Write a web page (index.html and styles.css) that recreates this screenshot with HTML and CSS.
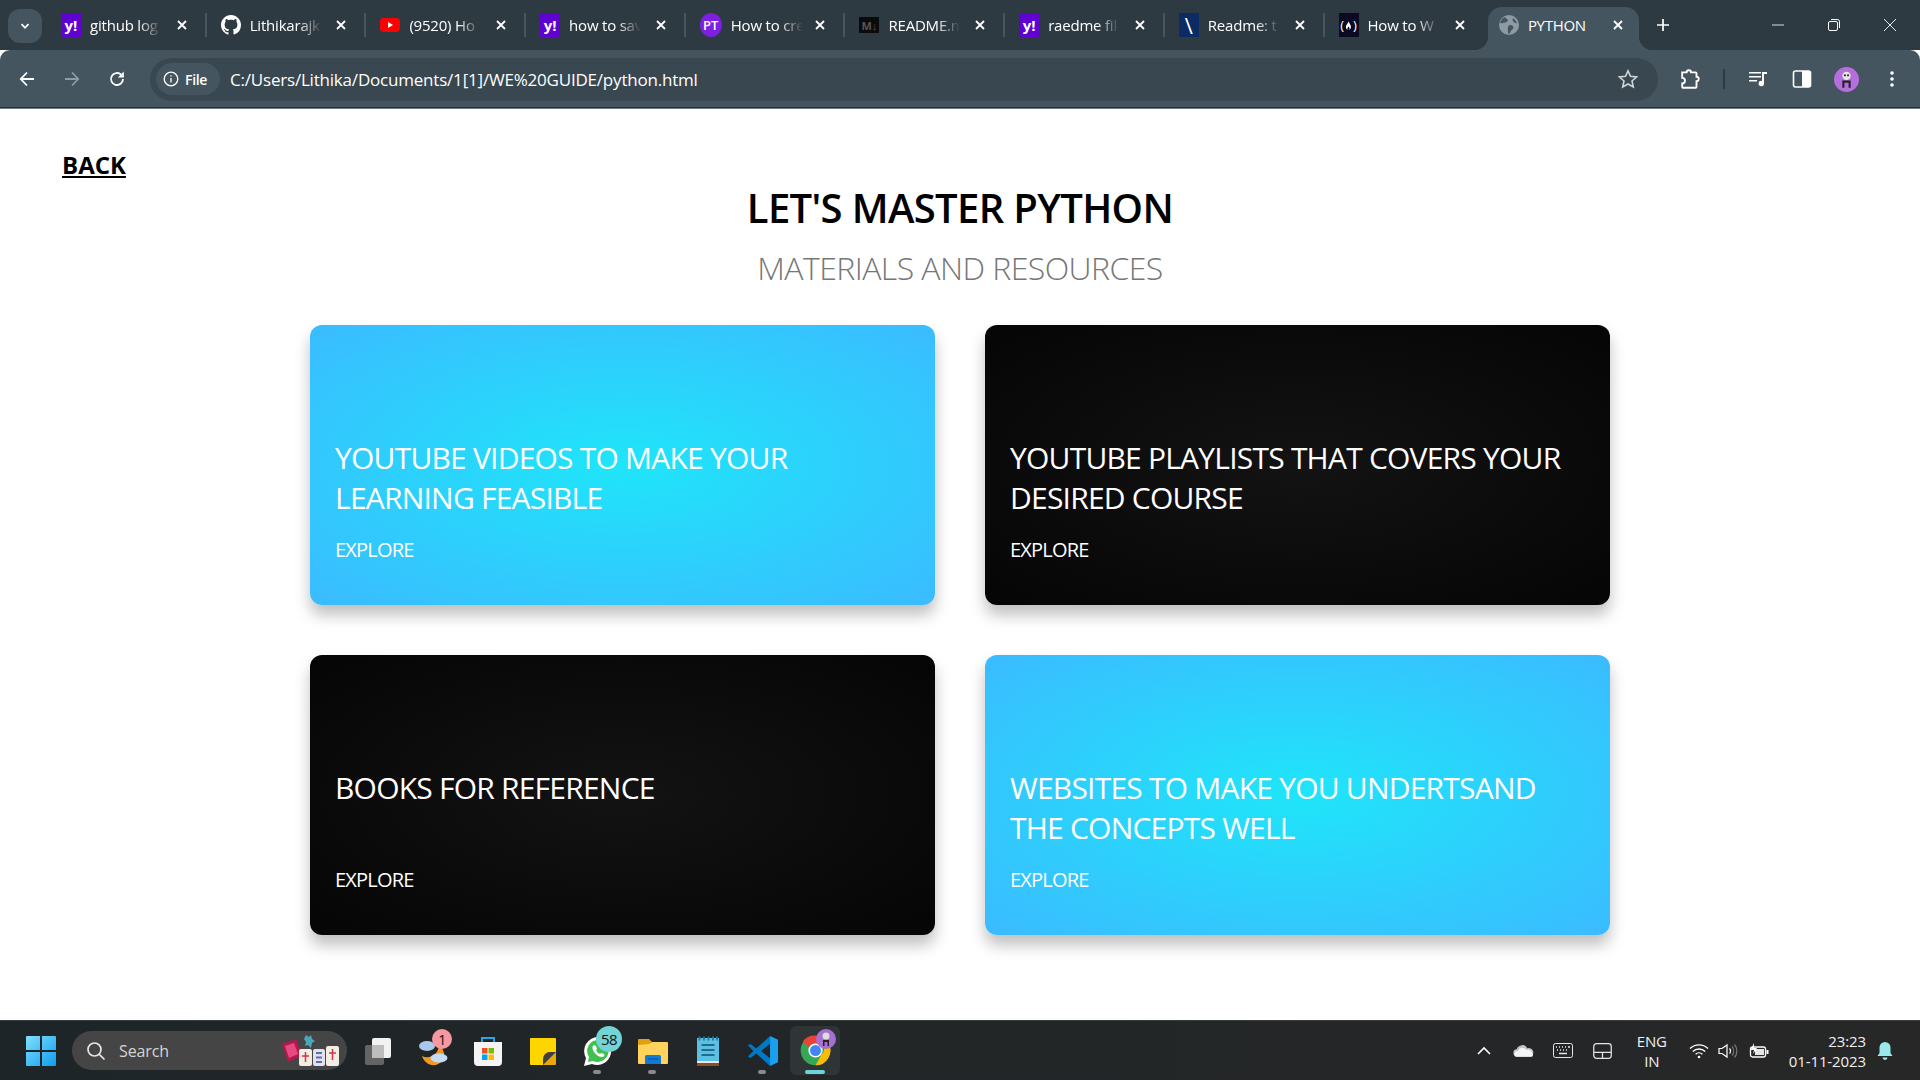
FILE: index.html
```html
<!DOCTYPE html>
<html lang="en">
<head>
  <meta charset="UTF-8">
  <title>PYTHON</title>
  <link rel="stylesheet" href="styles.css">
</head>
<body>

  <!-- browser tabs -->
  <div class="tabstrip">
    <div class="tab-search">
      <svg class="ic12" viewBox="0 0 12 12"><path d="M2.5 4.2 6 7.8l3.5-3.6" fill="none" stroke="#fff" stroke-width="1.8"/></svg>
    </div>
    <div class="tab">
      <span class="fav fav-yahoo">y!</span><span class="tab-title">github log</span>
      <svg class="tab-x" viewBox="0 0 12 12"><path d="M2 2l8 8M10 2l-8 8"/></svg>
    </div>
    <div class="tab">
      <svg class="fav" viewBox="0 0 16 16"><path fill="#fff" d="M8 0C3.58 0 0 3.58 0 8c0 3.54 2.29 6.53 5.47 7.59.4.07.55-.17.55-.38 0-.19-.01-.82-.01-1.49-2.01.37-2.53-.49-2.69-.94-.09-.23-.48-.94-.82-1.13-.28-.15-.68-.52-.01-.53.63-.01 1.08.58 1.23.82.72 1.21 1.87.87 2.33.66.07-.52.28-.87.51-1.07-1.78-.2-3.64-.89-3.64-3.95 0-.87.31-1.59.82-2.15-.08-.2-.36-1.02.08-2.12 0 0 .67-.21 2.2.82.64-.18 1.32-.27 2-.27.68 0 1.36.09 2 .27 1.53-1.04 2.2-.82 2.2-.82.44 1.1.16 1.92.08 2.12.51.56.82 1.27.82 2.15 0 3.07-1.87 3.75-3.65 3.95.29.25.54.73.54 1.48 0 1.07-.01 1.93-.01 2.2 0 .21.15.46.55.38A8.013 8.013 0 0016 8c0-4.42-3.58-8-8-8z"/></svg>
      <span class="tab-title">Lithikarajk</span>
      <svg class="tab-x" viewBox="0 0 12 12"><path d="M2 2l8 8M10 2l-8 8"/></svg>
    </div>
    <div class="tab">
      <svg class="fav" viewBox="0 0 20 20"><rect y="3" width="20" height="14" rx="4" fill="#f00"/><path d="M8 7l5 3-5 3z" fill="#fff"/></svg>
      <span class="tab-title">(9520) Ho</span>
      <svg class="tab-x" viewBox="0 0 12 12"><path d="M2 2l8 8M10 2l-8 8"/></svg>
    </div>
    <div class="tab">
      <span class="fav fav-yahoo">y!</span><span class="tab-title">how to sav</span>
      <svg class="tab-x" viewBox="0 0 12 12"><path d="M2 2l8 8M10 2l-8 8"/></svg>
    </div>
    <div class="tab">
      <span class="fav fav-pt">PT</span><span class="tab-title">How to cre</span>
      <svg class="tab-x" viewBox="0 0 12 12"><path d="M2 2l8 8M10 2l-8 8"/></svg>
    </div>
    <div class="tab">
      <span class="fav fav-md">M↓</span><span class="tab-title">README.m</span>
      <svg class="tab-x" viewBox="0 0 12 12"><path d="M2 2l8 8M10 2l-8 8"/></svg>
    </div>
    <div class="tab">
      <span class="fav fav-yahoo">y!</span><span class="tab-title">raedme fil</span>
      <svg class="tab-x" viewBox="0 0 12 12"><path d="M2 2l8 8M10 2l-8 8"/></svg>
    </div>
    <div class="tab">
      <span class="fav fav-slash">\</span><span class="tab-title">Readme: t</span>
      <svg class="tab-x" viewBox="0 0 12 12"><path d="M2 2l8 8M10 2l-8 8"/></svg>
    </div>
    <div class="tab tab-last">
      <span class="fav fav-fcc">(<svg class="flame" viewBox="0 0 8 12"><path d="M4 1c.4 2 2.800 3.500 2.800 6.500C6.800 9.800 5.500 11 5 11c.6-1.500 0-3-1-4-1 1-1.600 2.500-1 4-.6 0-2-1.200-2-3.500C1 5 3.800 3.500 4 1z" fill="#fff"/></svg>)</span>
      <span class="tab-title">How to W</span>
      <svg class="tab-x" viewBox="0 0 12 12"><path d="M2 2l8 8M10 2l-8 8"/></svg>
    </div>
    <div class="tab-active">
      <svg class="fav" viewBox="0 0 18 18"><circle cx="9" cy="9" r="9" fill="#8d9ba3"/><path d="M5 2c2 1 3 2 3 3S6 7 5 7 2 8 1 7c.5-2 2-4 4-5zM10 9c2 0 3 1 3 2s-1 2-2 3-1 3-2 3-1-3-1-4 0-4 2-4zM13 3c1 1 3 3 3 4s-2 0-3-1-1-3 0-3z" fill="#44555f"/></svg>
      <span class="active-title">PYTHON</span>
      <svg class="tab-x" viewBox="0 0 12 12"><path d="M2 2l8 8M10 2l-8 8"/></svg>
    </div>
    <svg class="new-tab" viewBox="0 0 14 14"><path d="M7 1v12M1 7h12" stroke="#fff" stroke-width="1.700"/></svg>
    <div class="win-btns">
      <span class="win-btn"><svg class="ic12" viewBox="0 0 12 12"><path d="M0 6h12" stroke="#d8dcde"/></svg></span>
      <span class="win-btn"><svg class="ic12" viewBox="0 0 12 12" fill="none" stroke="#fff"><rect x=".5" y="2.500" width="9" height="9" rx="1.500"/><path d="M3 .5h6.500a2 2 0 0 1 2 2V9"/></svg></span>
      <span class="win-btn"><svg class="ic12" viewBox="0 0 12 12"><path d="M0 0l12 12M12 0L0 12" stroke="#fff" stroke-width=".9"/></svg></span>
    </div>
  </div>

  <!-- address bar -->
  <div class="toolbar">
    <div class="nav-btns">
      <svg class="ic18" viewBox="0 0 18 18" fill="none" stroke="#fff" stroke-width="1.800"><path d="M16 9H3M9 2.500 2.800 9 9 15.500"/></svg>
      <svg class="ic18" viewBox="0 0 18 18" fill="none" stroke="#8f9ba2" stroke-width="1.800"><path d="M2 9h13M9 2.500 15.200 9 9 15.500"/></svg>
      <svg class="ic18" viewBox="0 0 18 18" fill="none" stroke="#fff" stroke-width="1.800"><path d="M15 9a6 6 0 1 1-1.800-4.300L15 6.500"/><path d="M15.800 1.500v6h-6z" stroke="none" fill="#fff"/></svg>
    </div>
    <div class="omnibox">
      <div class="chip">
        <svg class="ic16" viewBox="0 0 16 16" fill="none" stroke="#fff" stroke-width="1.300"><circle cx="8" cy="8" r="6.800"/><path d="M8 7v4.500M8 4.200v1.400"/></svg>
        <span>File</span>
      </div>
      <span class="url">C:/Users/Lithika/Documents/1[1]/WE%20GUIDE/python.html</span>
      <svg class="star" viewBox="0 0 20 20" fill="none" stroke="#cfd4d7" stroke-width="1.600"><path d="M10 1.800l2.500 5.500 6 .7-4.500 4 1.300 6L10 15l-5.300 3 1.300-6-4.500-4 6-.7z"/></svg>
    </div>
    <div class="tool-icons">
      <svg class="puzzle" viewBox="0 0 20 20" fill="none" stroke="#fff" stroke-width="1.700"><path d="M2 4h4a2 2 0 0 1 4 0h4a1 1 0 0 1 1 1v3a2 2 0 0 1 0 4v5a1 1 0 0 1-1 1H3a1 1 0 0 1-1-1v-3a2 2 0 0 0 0-5z"/></svg>
      <span class="tool-sep"></span>
      <svg class="ic20 media" viewBox="0 0 20 20" fill="#fff"><path d="M1 3h12v1.600H1zM1 7h12v1.600H1zM1 11h8v1.600H1z"/><path d="M14 3h5v2h-3v9.500a2.700 2.700 0 1 1-2-2.600z"/></svg>
      <svg class="ic20 panel" viewBox="0 0 20 20"><rect x="1.500" y="2" width="17" height="16" rx="2" fill="none" stroke="#fff" stroke-width="1.600"/><rect x="10" y="2" width="8" height="16" fill="#fff"/></svg>
      <svg class="avatar" viewBox="0 0 24 24"><circle cx="12" cy="12" r="12" fill="#b56fdc"/><circle cx="12" cy="8.500" r="4" fill="#e8e8e8"/><circle cx="10.500" cy="8" r="1" fill="#222"/><circle cx="13.500" cy="8" r="1" fill="#222"/><path d="M8 13h8v7h-2v-5h-4v5H8z" fill="#222"/></svg>
      <svg class="ic20 dots" viewBox="0 0 20 20" fill="#fff"><circle cx="10" cy="4" r="1.800"/><circle cx="10" cy="10" r="1.800"/><circle cx="10" cy="16" r="1.800"/></svg>
    </div>
  </div>

  <!-- the page itself -->
  <main class="page">
    <a class="back" href="#">BACK</a>
    <h1 class="title">LET'S MASTER PYTHON</h1>
    <h2 class="subtitle">MATERIALS AND RESOURCES</h2>

    <div class="cards">
      <div class="card card-blue">
        <h3>YOUTUBE VIDEOS TO MAKE YOUR LEARNING FEASIBLE</h3>
        <a href="#">EXPLORE</a>
      </div>
      <div class="card card-black">
        <h3>YOUTUBE PLAYLISTS THAT COVERS YOUR DESIRED COURSE</h3>
        <a href="#">EXPLORE</a>
      </div>
      <div class="card card-black">
        <h3>BOOKS FOR REFERENCE</h3>
        <a href="#">EXPLORE</a>
      </div>
      <div class="card card-blue">
        <h3>WEBSITES TO MAKE YOU UNDERTSAND THE CONCEPTS WELL</h3>
        <a href="#">EXPLORE</a>
      </div>
    </div>
  </main>

  <!-- windows taskbar -->
  <div class="taskbar">
    <svg class="start" viewBox="0 0 30 30"><defs><linearGradient id="win" x1="0" y1="0" x2="1" y2="1"><stop offset="0" stop-color="#7fe0fb"/><stop offset="1" stop-color="#0f9cf0"/></linearGradient></defs><path fill="url(#win)" d="M0 1a1 1 0 0 1 1-1h13v14H0zM16 0h13a1 1 0 0 1 1 1v13H16zM0 16h14v14H1a1 1 0 0 1-1-1zM16 16h14v13a1 1 0 0 1-1 1H16z"/></svg>

    <div class="search">
      <svg class="ic20" viewBox="0 0 20 20" fill="none" stroke="#e6e6e6" stroke-width="1.700"><circle cx="8.500" cy="8.500" r="6.500"/><path d="M13.300 13.300 18.500 18.500"/></svg>
      <span>Search</span>
      <svg class="search-art" viewBox="0 0 62 34"><path d="M3 10l14-5 6 17-14 6z" fill="#b5174f"/><path d="M6 12l9-3 4 11-9 4z" fill="#e84a7f"/><path d="M27 1l3 2 2-2 1 4 3 2-3 2-1 5-3-3-3 1 1-4-2-3z" fill="#4aa6b8"/><rect x="20" y="15" width="13" height="17" rx="2" fill="#f3eee4"/><rect x="34" y="15" width="12" height="17" rx="2" fill="#e3e1ea"/><rect x="47" y="12" width="13" height="20" rx="2" fill="#f3eee4"/><path d="M26.500 18v10M23 22h7M53.500 15v11M50 19h7" stroke="#d6334a" stroke-width="1.500"/><path d="M37 19h6M37 23.500h6M37 28h6" stroke="#5a6bc0" stroke-width="2"/></svg>
    </div>

    <div class="task-icons">
      <span class="task-slot">
        <svg class="ic32" viewBox="0 0 32 32"><rect x="10" y="3" width="19" height="20" rx="2" fill="#f2f2f2"/><rect x="3" y="10" width="19" height="20" rx="2" fill="#6b6b6b" fill-opacity=".9"/><rect x="10" y="10" width="12" height="13" fill="#bdbdbd"/></svg>
      </span>
      <span class="task-slot">
        <svg class="ic32" viewBox="0 0 32 32"><path d="M22 11a13 11 0 0 1-3 19C12 31 7 27 5 21c6 3 15 1 17-10z" fill="#f39a1d"/><ellipse cx="10" cy="11" rx="8" ry="5" fill="#a8c8ec"/><ellipse cx="22" cy="23" rx="8.500" ry="4.500" fill="#c4dcf5"/></svg>
        <span class="badge badge-red">1</span>
      </span>
      <span class="task-slot">
        <svg class="ic32" viewBox="0 0 32 32"><path d="M10 8V3h12v5" fill="none" stroke="#2aa5e8" stroke-width="2"/><path d="M2 7h28v20a4 4 0 0 1-4 4H6a4 4 0 0 1-4-4z" fill="#f4f4f4"/><rect x="10" y="13" width="5.500" height="5.500" fill="#f25022"/><rect x="16.500" y="13" width="5.500" height="5.500" fill="#7fba00"/><rect x="10" y="19.500" width="5.500" height="5.500" fill="#00a4ef"/><rect x="16.500" y="19.500" width="5.500" height="5.500" fill="#ffb900"/></svg>
      </span>
      <span class="task-slot">
        <svg class="ic32" viewBox="0 0 32 32"><path d="M4 3h24a1 1 0 0 1 1 1v18l-8 8H4a1 1 0 0 1-1-1V4a1 1 0 0 1 1-1z" fill="#ffd500"/><path d="M29 17v12a1 1 0 0 1-1 1H16v-6a7 7 0 0 1 7-7z" fill="#e8a70c"/><path d="M29 17 16 30v-6a7 7 0 0 1 7-7z" fill="#3f3f3f"/></svg>
      </span>
      <span class="task-slot has-dot">
        <svg class="ic32" viewBox="0 0 32 32"><path d="M16 2a14 14 0 0 0-12 21L2 31l8-2A14 14 0 1 0 16 2z" fill="#fff"/><path d="M16 5a11 11 0 0 0-9 17l-1 5 5-1A11 11 0 1 0 16 5z" fill="#3fc04f"/><path d="M12 10c-2 1-2 4 0 7s5 5 8 5c2 0 3-2 2-3l-3-1-1 1c-2-1-3-2-4-4l1-1-1-3z" fill="#fff"/></svg>
        <span class="badge badge-teal">58</span>
      </span>
      <span class="task-slot has-dot">
        <svg class="ic32" viewBox="0 0 32 32"><path d="M1 5a1 1 0 0 1 1-1h10l3 3-3 3H1z" fill="#e0a010"/><path d="M1 10l11-1 3-2h15a1 1 0 0 1 1 1v20a1 1 0 0 1-1 1H2a1 1 0 0 1-1-1z" fill="#ffd35c"/><path d="M6 29v-7a2 2 0 0 1 2-2h16a2 2 0 0 1 2 2v7z" fill="#0f7bd6" transform="translate(3.200 0) scale(.8 1)"/><path d="M11 24h10" stroke="#0a5ca6" stroke-width="1.500"/></svg>
      </span>
      <span class="task-slot">
        <svg class="ic32" viewBox="0 0 32 32"><rect x="5" y="3" width="22" height="26" fill="#5bc0e4"/><path d="M5 26h22v5H5z" fill="#8a4f24"/><path d="M5 26h22v2H5z" fill="#e8e8e8"/><path d="M9.500 10h13M9.500 15h13M9.500 20h13" stroke="#1e6d8e" stroke-width="2"/><path d="M7.500 1.500v4M12 1.500v4M16.500 1.500v4M21 1.500v4M25 1.500v4" stroke="#1e7d9e" stroke-width="1.800"/></svg>
      </span>
      <span class="task-slot has-dot">
        <svg class="ic32" viewBox="0 0 100 100"><path fill="#0078c8" fill-rule="evenodd" d="M72 3 29 42 11 28 3 33l17 17L3 67l8 5 18-14 43 39zM72 27 44 50l28 23z"/><path fill="#1ba0ee" d="M72 3l25 12v70L72 97z"/></svg>
      </span>
      <span class="task-slot task-active">
        <svg class="chrome-logo" viewBox="0 0 48 48"><circle cx="24" cy="24" r="23" fill="#34a853"/><path d="M24 1a23 23 0 0 1 20 11.500H24A11.500 11.500 0 0 0 13.800 19L4.500 9.800A23 23 0 0 1 24 1z" fill="#ea4335"/><path d="M44 12.500A23 23 0 0 1 24 47l10-17.500a11.500 11.500 0 0 0-.5-17z" fill="#fbbc05"/><circle cx="24" cy="24" r="11" fill="#fff"/><circle cx="24" cy="24" r="8.500" fill="#4285f4"/></svg>
        <svg class="chrome-avatar" viewBox="0 0 20 20"><circle cx="10" cy="10" r="10" fill="#a76fd1"/><circle cx="10" cy="7" r="3.500" fill="#ddd"/><path d="M7 11h6v6h-1.500v-4h-3v4H7z" fill="#222"/></svg>
      </span>
    </div>

    <div class="tray">
      <svg class="tray-chevron" viewBox="0 0 14 14"><path d="M1 10l6-6 6 6" fill="none" stroke="#fff" stroke-width="1.600"/></svg>
      <svg class="tray-cloud" viewBox="0 0 22 14"><path d="M5 13a4 4 0 0 1-1-8 6 6 0 0 1 11-1 4.500 4.500 0 0 1 3 9z" fill="#bfc3c5"/><path d="M4 13a3 3 0 0 1 1-6 5 5 0 0 1 9-1 4 4 0 0 1 6 3 2.500 2.500 0 0 1 0 4z" fill="#f4f4f4"/></svg>
      <svg class="tray-key" viewBox="0 0 20 15" fill="none" stroke="#e6e6e6"><rect x=".5" y=".5" width="19" height="14" rx="2"/><path d="M3 4h1M6 4h1M9 4h1M12 4h1M15 4h2M4 7h1M7 7h1M10 7h1M13 7h1M6 10.500h8" stroke-width="1.300"/></svg>
      <svg class="tray-pad" viewBox="0 0 20 17" fill="none" stroke="#e6e6e6" stroke-width="1.300"><rect x=".7" y=".7" width="18.600" height="15.600" rx="3"/><path d="M1 10h18M10 10v6"/></svg>
      <div class="lang">ENG<br>IN</div>
      <svg class="tray-wifi" viewBox="0 0 20 16" fill="none" stroke="#fff" stroke-width="1.400"><path d="M1 5.500a13 13 0 0 1 18 0M3.800 8.500a9 9 0 0 1 12.400 0M6.600 11.200a5 5 0 0 1 6.800 0"/><circle cx="10" cy="14" r="1.300" fill="#fff" stroke="none"/></svg>
      <svg class="tray-vol" viewBox="0 0 20 16" fill="none" stroke="#fff" stroke-width="1.200"><path d="M1 5.500h3L9 2v12L4 10.500H1z"/><path d="M11.500 5.500a3.500 3.500 0 0 1 0 5"/><path d="M14 3.500a7 7 0 0 1 0 9M16.500 1.500a10 10 0 0 1 0 13" stroke="#777"/></svg>
      <svg class="tray-bat" viewBox="0 0 20 16"><rect x="1.500" y="4" width="15" height="10" rx="2" fill="none" stroke="#fff" stroke-width="1.300"/><rect x="6" y="6" width="9" height="6" fill="#e6e6e6"/><path d="M17.500 7h2v4h-2z" fill="#fff"/><path d="M5 0 1.500 7H5l-1 4 4-6H5z" fill="#fff"/></svg>
      <div class="clock">23:23<br>01-11-2023</div>
      <svg class="tray-bell" viewBox="0 0 18 20"><path d="M9 1a5.500 5.500 0 0 1 5.500 5.500V12l2 3h-15l2-3V6.500A5.500 5.500 0 0 1 9 1z" fill="#9be8ea"/><path d="M6.500 16.500h5a2.500 2.500 0 0 1-5 0z" fill="#9be8ea"/></svg>
    </div>
  </div>

</body>
</html>
```

FILE: styles.css
```css
* {
  box-sizing: border-box;
}

body {
  margin: 0;
  height: 1080px;
  overflow: hidden;
  display: flex;
  flex-direction: column;
  background-color: white;
  font-family: "Open Sans", "Noto Sans", sans-serif;
}

svg {
  flex: none;
  display: block;
}

.ic12 { width: 12px; height: 12px; }
.ic16 { width: 16px; height: 16px; }
.ic18 { width: 18px; height: 18px; }
.ic20 { width: 20px; height: 20px; }
.ic32 { width: 32px; height: 32px; }

/* tabs */
.tabstrip {
  height: 50px;
  flex: none;
  display: flex;
  align-items: center;
  background-color: #2e3a41;
  padding-left: 8px;
  color: white;
  font-size: 15px;
}

.tab-search {
  width: 34px;
  height: 34px;
  margin-right: 5px;
  margin-top: 1px;
  border-radius: 12px;
  background-color: #44555f;
  display: flex;
  align-items: center;
  justify-content: center;
}

.tab {
  width: 159.7px;
  height: 24px;
  padding-left: 14px;
  padding-right: 17px;
  display: flex;
  align-items: center;
  border-right: 2px solid #46555e;
}

.tab-last {
  width: 159.4px;
  border-right: none;
  padding-right: 18px;
}

.fav {
  width: 20px;
  height: 20px;
  flex: none;
  display: flex;
  align-items: center;
  justify-content: center;
  font-weight: 700;
  font-size: 15px;
  line-height: 1;
}

.fav-yahoo { background-color: #5f01d1; height: 24px; }
.fav-pt { background-color: #7c1fe0; border-radius: 50%; height: 24px; width: 22px; font-size: 13px; font-weight: 600; }
.fav-md { background-color: #0b0b0b; color: #555; font-size: 11px; height: 16px; }
.fav-slash { background-color: #0c2a63; font-size: 22px; height: 24px; font-weight: 400; }
.fav-fcc { background-color: #0a0a23; font-size: 13px; height: 24px; font-weight: 400; gap: 1px; }
.flame { width: 7px; height: 11px; }

.tab-title {
  width: 78px;
  margin-left: 9px;
  white-space: nowrap;
  overflow: hidden;
  letter-spacing: -0.2px;
  -webkit-mask-image: linear-gradient(to right, black 62%, transparent 92%);
  mask-image: linear-gradient(to right, black 62%, transparent 92%);
}

.tab-x {
  width: 12px;
  height: 12px;
  margin-left: auto;
  fill: none;
  stroke: white;
  stroke-width: 1.8;
}

.tab-active {
  position: relative;
  width: 151px;
  height: 43px;
  margin-top: 7px;
  margin-left: 4px;
  padding: 0 15px 7px 11px;
  display: flex;
  align-items: center;
  background-color: #44555f;
  border-radius: 14px 14px 0 0;
}

.tab-active::before,
.tab-active::after {
  content: "";
  position: absolute;
  bottom: 0;
  width: 14px;
  height: 14px;
}

.tab-active::before {
  left: -14px;
  background: radial-gradient(circle at 0 0, transparent 14px, #44555f 14.5px);
}

.tab-active::after {
  right: -14px;
  background: radial-gradient(circle at 100% 0, transparent 14px, #44555f 14.5px);
}

.active-title {
  margin-left: 9px;
  font-weight: 500;
  letter-spacing: -0.3px;
}

.new-tab {
  width: 14px;
  height: 14px;
  margin-left: 17px;
}

.win-btns {
  margin-left: auto;
  display: flex;
  padding-right: 2px;
}

.win-btn {
  width: 56px;
  height: 50px;
  display: flex;
  align-items: center;
  justify-content: center;
}

/* address bar */
.toolbar {
  height: 59px;
  flex: none;
  display: flex;
  align-items: center;
  background-color: #44555f;
  border-bottom: 1px solid #6b7a83;
  box-shadow: inset 0 -1px 0 #22303a;
  border-radius: 10px 10px 0 0;
  color: white;
}

.nav-btns {
  width: 150px;
  padding-left: 18px;
  display: flex;
  gap: 27px;
}

.omnibox {
  width: 1508px;
  height: 43px;
  padding-left: 6px;
  padding-right: 20px;
  display: flex;
  align-items: center;
  border-radius: 22px;
  background-color: #394750;
}

.chip {
  width: 64px;
  height: 32px;
  padding-left: 7px;
  display: flex;
  align-items: center;
  gap: 6px;
  border-radius: 16px;
  background-color: #44555f;
  font-size: 14px;
  font-weight: 600;
  letter-spacing: -0.3px;
}

.url {
  margin-left: 10px;
  font-size: 17px;
  letter-spacing: -0.2px;
}

.star {
  width: 20px;
  height: 20px;
  margin-left: auto;
}

.tool-icons {
  flex: 1;
  display: flex;
  align-items: center;
}

.puzzle {
  width: 22px;
  height: 22px;
  margin-left: 22px;
}

.tool-sep {
  width: 2px;
  height: 20px;
  margin-left: 21px;
  background-color: #2e3a41;
}

.media { margin-left: 23px; }
.panel { margin-left: 24px; }

.avatar {
  width: 25px;
  height: 25px;
  margin-left: 22px;
}

.dots { margin-left: 23px; }

/* page */
.page {
  flex: 1;
  display: flex;
  flex-direction: column;
  align-items: center;
  overflow: hidden;
}

.back {
  align-self: flex-start;
  margin-top: 39px;
  margin-left: 62px;
  color: black;
  font-size: 24px;
  line-height: 33px;
  font-weight: 700;
  letter-spacing: 0;
}

.title {
  margin: 0;
  margin-top: 2px;
  font-size: 40px;
  line-height: 50px;
  font-weight: 600;
  color: black;
  letter-spacing: -0.65px;
}

.subtitle {
  margin: 0;
  margin-top: 17px;
  font-size: 32px;
  line-height: 36px;
  font-weight: 300;
  color: #777;
  letter-spacing: -0.57px;
}

.cards {
  width: 1300px;
  margin-top: 39px;
  display: grid;
  grid-template-columns: 1fr 1fr;
  gap: 50px;
}

.card {
  height: 280px;
  padding: 0 25px 43px;
  display: flex;
  flex-direction: column;
  justify-content: flex-end;
  border-radius: 12px;
  color: white;
  box-shadow: 0 10px 15px rgba(0, 0, 0, 0.25);
}

.card-blue {
  background: radial-gradient(ellipse at center, #1fe5f9 0%, #3bbbff 100%);
}

.card-black {
  background: radial-gradient(ellipse at center, #131313 0%, #050505 100%);
}

.card h3 {
  margin: 0;
  height: 80px;
  font-size: 30px;
  line-height: 40px;
  font-weight: 400;
  letter-spacing: -0.78px;
}

.card a {
  margin-top: 20px;
  color: white;
  font-size: 20px;
  line-height: 24px;
  font-weight: 400;
  letter-spacing: -0.8px;
  text-decoration: none;
}

/* taskbar */
.taskbar {
  height: 60px;
  flex: none;
  display: flex;
  align-items: center;
  padding-left: 26px;
  color: white;
  background: linear-gradient(to right, #1e2528, #272727);
  border-top: 1px solid #3a3d3f;
}

.start {
  width: 30px;
  height: 30px;
}

.search {
  width: 275px;
  height: 39px;
  margin-left: 16px;
  padding-left: 14px;
  padding-right: 6px;
  display: flex;
  align-items: center;
  gap: 13px;
  border-radius: 20px;
  background-color: #454545;
  color: #d5d5d5;
  font-size: 16px;
  letter-spacing: -0.1px;
}

.search-art {
  width: 62px;
  height: 34px;
  margin-left: auto;
}

.task-icons {
  margin-left: 3px;
  display: flex;
  align-items: center;
}

.task-slot {
  position: relative;
  width: 55px;
  height: 47px;
  display: flex;
  align-items: center;
  justify-content: center;
}

.has-dot::after {
  content: "";
  position: absolute;
  left: 23px;
  bottom: 0;
  width: 8px;
  height: 4px;
  border-radius: 2px;
  background-color: #8a8a8a;
}

.task-active {
  width: 50px;
  height: 49px;
  border-radius: 6px;
  background-color: #2f3436;
}

.task-active::after {
  content: "";
  position: absolute;
  left: 15px;
  bottom: 1px;
  width: 20px;
  height: 4px;
  border-radius: 2px;
  background-color: #6ed3d6;
}

.chrome-logo {
  width: 31px;
  height: 31px;
}

.chrome-avatar {
  position: absolute;
  top: 3px;
  left: 26px;
  width: 20px;
  height: 20px;
}

.badge {
  position: absolute;
  top: 2px;
  right: 8px;
  width: 20px;
  height: 20px;
  border-radius: 50%;
  display: flex;
  align-items: center;
  justify-content: center;
  font-size: 14px;
  letter-spacing: -0.5px;
  color: #111;
}

.badge-red { background-color: #f797a2; }

.badge-teal {
  top: -1px;
  right: 3px;
  width: 26px;
  height: 26px;
  font-size: 15px;
  background-color: #72d4d4;
}

.tray {
  flex: 1;
  display: flex;
  align-items: center;
  justify-content: flex-end;
  padding-right: 26px;
  font-size: 15px;
  color: #f0f0f0;
}

.tray-chevron { width: 14px; height: 14px; margin-right: 22px; }
.tray-cloud { width: 21px; height: 14px; margin-right: 19px; }
.tray-key { width: 20px; height: 15px; margin-right: 20px; }
.tray-pad { width: 19px; height: 16px; }

.lang {
  width: 40px;
  margin-left: 20px;
  text-align: center;
  line-height: 20px;
  letter-spacing: -0.2px;
}

.tray-wifi { width: 20px; height: 16px; margin-left: 17px; }
.tray-vol { width: 20px; height: 16px; margin-left: 9px; }
.tray-bat { width: 20px; height: 16px; margin-left: 11px; }

.clock {
  margin-left: 20px;
  text-align: right;
  line-height: 20px;
  letter-spacing: -0.1px;
}

.tray-bell { width: 18px; height: 20px; margin-left: 10px; }
```
